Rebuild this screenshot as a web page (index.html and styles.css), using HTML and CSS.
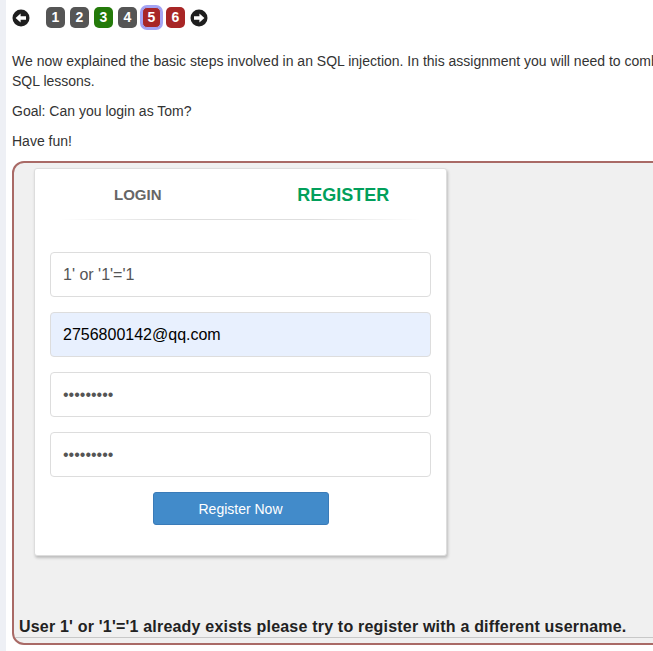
FILE: index.html
```html
<!DOCTYPE html>
<html>
<head>
<meta charset="utf-8">
<link rel="stylesheet" href="styles.css">
</head>
<body>
<div class="page">
  <div class="gutter"></div>
  <div class="main">
    <div class="nav">
      <svg class="arrow" viewBox="0 0 18 18" width="18" height="18"><circle cx="9" cy="9" r="8.5" fill="#1e1e1e"/><path d="M3.6 9 L8.6 4.4 L8.6 7.3 L14 7.3 L14 10.7 L8.6 10.7 L8.6 13.6 Z" fill="#fff"/></svg>
      <div class="pages">
        <span class="pg gray">1</span>
        <span class="pg gray">2</span>
        <span class="pg green">3</span>
        <span class="pg gray">4</span>
        <span class="pg red active">5</span>
        <span class="pg red">6</span>
        <svg class="arrow" viewBox="0 0 18 18" width="18" height="18"><circle cx="9" cy="9" r="8.5" fill="#1e1e1e"/><path d="M14.4 9 L9.4 4.4 L9.4 7.3 L4 7.3 L4 10.7 L9.4 10.7 L9.4 13.6 Z" fill="#fff"/></svg>
      </div>
    </div>
    <div class="text">
      <p>We now explained the basic steps involved in an SQL injection. In this assignment you will need to combine all the things we explained in the SQL lessons.</p>
      <p>Goal: Can you login as Tom?</p>
      <p>Have fun!</p>
    </div>
    <div class="assignment">
      <div class="card">
        <div class="tabs">
          <span class="tab login">LOGIN</span>
          <span class="tab register">REGISTER</span>
        </div>
        <div class="sep"></div>
        <form class="form">
          <input class="field" type="text" value="1' or '1'='1">
          <input class="field autofill" type="text" value="2756800142@qq.com">
          <input class="field" type="password" value="123456789">
          <input class="field" type="password" value="123456789">
          <div class="actions"><button type="button" class="btn">Register Now</button></div>
        </form>
      </div>
      <div class="feedback">User 1' or '1'='1 already exists please try to register with a different username.</div>
    </div>
  </div>
</div>
</body>
</html>
```
FILE: styles.css
```css
html, body {
  margin: 0;
  padding: 0;
  overflow: hidden;
  background: #fff;
}
body {
  font-family: "Liberation Sans", Arial, Helvetica, sans-serif;
  font-size: 14px;
  line-height: 20px;
  color: #333;
}
.page {
  display: flex;
  width: 900px;
  min-height: 651px;
}
.gutter {
  width: 6px;
  flex: none;
  background: #eef0f5;
}
.main {
  flex: none;
  width: 888px;
  padding-left: 6px;
}
.nav {
  display: flex;
  align-items: center;
  height: 21px;
  margin-top: 7px;
}
.nav .arrow {
  display: block;
}
.pages {
  display: flex;
  align-items: center;
  gap: 5px;
  margin-left: 16px;
}
.pg {
  display: block;
  width: 19px;
  height: 21px;
  border-radius: 5px;
  color: #fff;
  font-weight: bold;
  font-size: 14px;
  line-height: 21px;
  text-align: center;
  box-sizing: border-box;
}
.gray { background: #555; }
.green { background: #247a0a; }
.red { background: #a82626; }
.active {
  box-shadow: 0 0 0 2px #a4a4f4;
  border: 1px solid #a4a4f4;
  line-height: 19px;
}
.text {
  margin-top: 23px;
  width: 885px;
}
.text p {
  margin: 0 0 10px;
}
.assignment {
  border: 2px solid #a96a66;
  border-radius: 12px;
  background: #f0f0f0;
  padding: 5px 0 5px;
}
.card {
  margin-left: 20px;
  width: 413px;
  box-sizing: border-box;
  background: #fff;
  border: 1px solid #ddd;
  border-radius: 3px;
  box-shadow: 1px 2px 3px rgba(0,0,0,0.22);
  padding: 14px 15px 30px 15px;
}
.tabs {
  display: flex;
  height: 24px;
  align-items: center;
  margin: 0 -15px;
}
.tab {
  flex: 1;
  text-align: center;
  font-weight: bold;
}
.login {
  font-size: 15px;
  color: #666;
}
.register {
  font-size: 18px;
  color: #029f5b;
}
.sep {
  height: 1px;
  margin: 12px 10px 0;
  background: linear-gradient(to right, rgba(0,0,0,0), rgba(0,0,0,0.13) 30%, rgba(0,0,0,0.13) 70%, rgba(0,0,0,0));
}
.form {
  display: flex;
  flex-direction: column;
  gap: 15px;
  margin: 32px 0 0;
}
.field {
  display: block;
  width: 100%;
  height: 45px;
  box-sizing: border-box;
  border: 1px solid #ddd;
  border-radius: 4px;
  padding: 0 12px;
  font-family: "Liberation Sans", Arial, sans-serif;
  font-size: 16px;
  color: #555;
  background: #fff;
  outline: none;
}
.autofill {
  background: #e8f0fe;
  color: #000;
}
.actions {
  display: flex;
  justify-content: center;
}
.btn {
  width: 176px;
  height: 33px;
  border: 1px solid #3a7bb8;
  border-radius: 3px;
  background: #428bca;
  color: #fff;
  font-family: "Liberation Sans", Arial, sans-serif;
  font-size: 14px;
  padding: 0;
}
.feedback {
  margin: 62px 0 0 1px;
  padding: 0 0 1px 4px;
  font-weight: bold;
  font-size: 16px;
  letter-spacing: 0.2px;
  line-height: 18px;
  color: #222;
  border-bottom: 1px solid #c8c8c8;
}
```
